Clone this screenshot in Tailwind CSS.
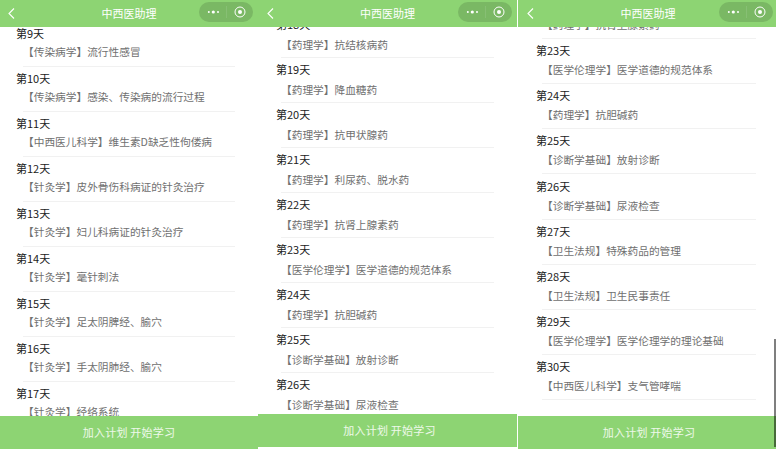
<!DOCTYPE html>
<html lang="zh-CN">
<head>
    <meta charset="UTF-8">
    <title>中西医助理</title>
    <script src="https://cdn.jsdelivr.net/npm/@tailwindcss/browser@4"></script>
</head>
<body class="bg-white w-[776px] h-[449px] overflow-hidden font-['Noto_Sans_CJK_SC',sans-serif]">
    <div class="flex h-[449px] w-[776px]">
        <section data-panel="0" class="panel w-[258px] h-[449px] flex flex-col shrink-0"></section>
        <section data-panel="1" class="panel w-[259px] h-[447px] flex flex-col shrink-0"></section>
        <section data-panel="2" class="panel relative ml-px w-[258px] h-[449px] flex flex-col shrink-0"></section>
    </div>

    <script>
        const panels = [
            { offset: '-mt-[5px]', rowH: 'h-[45px] pl-[16px]', sub: 'ml-[7px] mr-[23px] leading-[15px]', back: 'left-[8px]', capsule: 'left-[199px]', title: '', foot: '', start: 9, items: [
                '【传染病学】流行性感冒', '【传染病学】感染、传染病的流行过程', '【中西医儿科学】维生素D缺乏性佝偻病',
                '【针灸学】皮外骨伤科病证的针灸治疗', '【针灸学】妇儿科病证的针灸治疗', '【针灸学】毫针刺法',
                '【针灸学】足太阴脾经、腧穴', '【针灸学】手太阴肺经、腧穴', '【针灸学】经络系统'] },
            { offset: '-mt-[14px]', rowH: 'h-[45px] pl-[18px]', sub: 'ml-[5px] mr-[23px] leading-[19px]', back: 'left-[9px]', capsule: 'left-[200px]', title: '', foot: 'pl-[4px]', start: 18, items: [
                '【药理学】抗结核病药', '【药理学】降血糖药', '【药理学】抗甲状腺药', '【药理学】利尿药、脱水药',
                '【药理学】抗肾上腺素药', '【医学伦理学】医学道德的规范体系', '【药理学】抗胆碱药',
                '【诊断学基础】放射诊断', '【诊断学基础】尿液检查'] },
            { offset: '-mt-[33px]', rowH: 'h-[45.15px] pl-[18px]', sub: 'ml-[6px] mr-[20px] leading-[17px]', back: 'left-[9px]', capsule: 'left-[201px]', title: 'ml-[2px]', foot: 'pl-[4px]', start: 22, items: [
                '【药理学】抗肾上腺素药', '【医学伦理学】医学道德的规范体系', '【药理学】抗胆碱药', '【诊断学基础】放射诊断',
                '【诊断学基础】尿液检查', '【卫生法规】特殊药品的管理', '【卫生法规】卫生民事责任',
                '【医学伦理学】医学伦理学的理论基础', '【中西医儿科学】支气管哮喘'] }
        ];

        const header = (p) => `
            <header class="relative z-10 h-[27px] shrink-0 bg-[#8dd473] flex items-center justify-center">
                <svg class="absolute ${p.back} top-[8px]" width="7" height="11" viewBox="0 0 7 11" fill="none" stroke="#fff" stroke-width="1.1"><path d="M6 .5 L1 5.5 L6 10.5"/></svg>
                <span class="text-[11px] text-white leading-none -mt-px ${p.title}">中西医助理</span>
                <div class="absolute ${p.capsule} top-[2px] w-[54px] h-[20px] rounded-full bg-[#7ab864] flex items-center">
                    <svg class="ml-[8px]" width="13" height="6" viewBox="0 0 13 6" fill="#fff"><circle cx="1.8" cy="3" r="1"/><circle cx="6.3" cy="3" r="1.6"/><circle cx="11" cy="3" r="1"/></svg>
                    <span class="ml-[6px] w-px h-[12px] bg-white/10"></span>
                    <svg class="ml-[7px]" width="12" height="12" viewBox="0 0 12 12" fill="none"><circle cx="6" cy="6" r="5" stroke="#fff" stroke-width="1"/><circle cx="6" cy="6" r="2" fill="#fff"/></svg>
                </div>
            </header>`;

        const row = (day, text, p) => `
            <li class="${p.rowH}">
                <div class="h-[22px] pt-[1px] text-[11px] leading-[20px] text-[#222]">第${day}天</div>
                <div class="${p.sub} h-[23px] border-b border-[#f1f1f1] text-[10.7px] text-[#707070] whitespace-nowrap">${text}</div>
            </li>`;

        document.querySelectorAll('.panel').forEach((el, i) => {
            const p = panels[i];
            el.innerHTML = header(p) + `
                <main class="flex-1 overflow-hidden">
                    <ul class="${p.offset}">${p.items.map((t, n) => row(p.start + n, t, p)).join('')}</ul>
                </main>
                <footer class="${p.foot} h-[33px] shrink-0 bg-[#8dd473] flex items-center justify-center text-[11px] tracking-[0.25px] text-white/85">加入计划 开始学习</footer>`;
        });

        // scrollbar on the last panel
        document.querySelector('[data-panel="2"]').insertAdjacentHTML('beforeend',
            '<div class="absolute right-0 top-[339px] w-[2px] h-[108px] bg-black/50"></div>');
    </script>
</body>
</html>
